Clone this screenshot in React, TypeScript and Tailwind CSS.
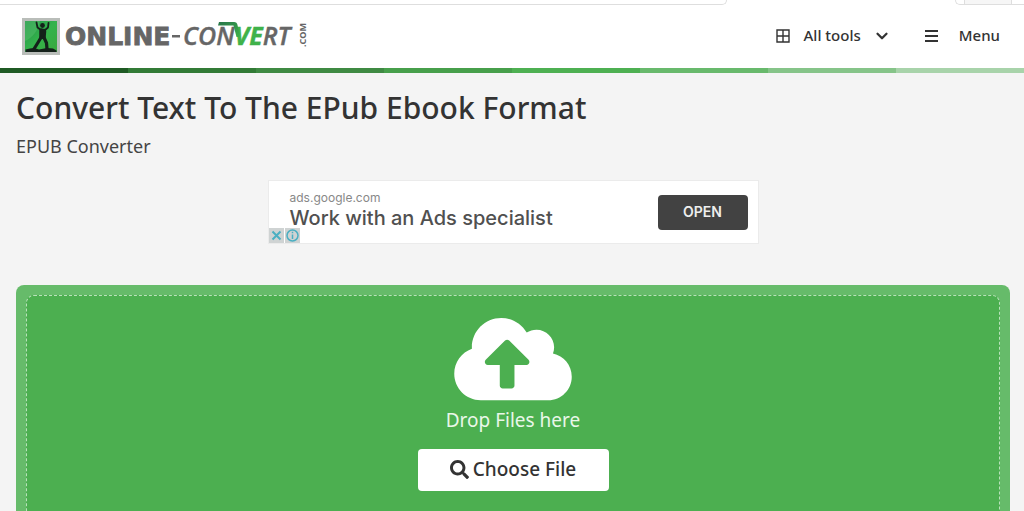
import { useRef } from "react";
import { FaCloudUploadAlt, FaSearch } from "react-icons/fa";
import { ChevronDown } from "lucide-react";

const STRIPES = [
  "bg-[#1f5a24]",
  "bg-[#327b36]",
  "bg-[#3f8a43]",
  "bg-[#479f4b]",
  "bg-[#4eb052]",
  "bg-[#68b96c]",
  "bg-[#86c489]",
  "bg-[#a8d3aa]",
];

function Logo() {
  return (
    <svg width="288" height="40" viewBox="0 0 288 40" role="img" aria-label="Online-Convert.com">
      <defs>
        <linearGradient id="badge" x1="0" y1="0" x2="1" y2="1">
          <stop offset="0" stopColor="#22914b" />
          <stop offset="0.5" stopColor="#34b34b" />
          <stop offset="1" stopColor="#3aa83c" />
        </linearGradient>
        <linearGradient id="swoosh" x1="0" y1="0" x2="1" y2="1">
          <stop offset="0" stopColor="#27744a" />
          <stop offset="1" stopColor="#3fb24a" />
        </linearGradient>
      </defs>

      {/* statue badge */}
      <rect x="0" y="1" width="38" height="37" fill="#b9bdb9" />
      <rect x="3" y="4" width="32" height="31" fill="url(#badge)" />
      <path d="M3 24C10 21 16 14 18 4H3z" fill="#5cc46e" opacity="0.45" />
      <g fill="none" stroke="#14211a" strokeLinecap="round" strokeLinejoin="round">
        <path d="M14.500 5.500L15.500 10.500L19 13M26.500 6L26 10.500L22.500 13.500" strokeWidth="1.800" />
        <path d="M19.500 13.500V20M22 14L21.500 20" strokeWidth="4.500" />
        <path d="M19 20.500L16 25.500L12 32M22 20.500L24.500 26L25 32" strokeWidth="3.200" />
      </g>
      <circle cx="20.500" cy="8.500" r="2.400" fill="#14211a" />
      <path d="M3.500 35V32.500L8 31.500L12 31L17 32.500L25 31L31 31.500L34.500 33.500V35z" fill="#14211a" />

      {/* wordmark */}
      <text
        x="43"
        y="28"
        fontFamily="DejaVu Sans, sans-serif"
        fontWeight="700"
        fontSize="25"
        fill="#666"
        stroke="#666"
        strokeWidth="0.800"
      >
        ONLINE
      </text>
      <rect x="150" y="18" width="8" height="2.500" fill="#666" />
      <text
        x="161"
        y="28"
        fontFamily="Open Sans, sans-serif"
        fontStyle="italic"
        fontWeight="600"
        fontSize="25"
        fill="#666"
        stroke="#666"
        strokeWidth="0.400"
      >
        CON
        <tspan fill="#3fb24a" stroke="#3fb24a" fontWeight="700">
          VE
        </tspan>
        RT
      </text>
      <path d="M197 5H212Q215 5 215.500 8L218 20L214.500 20L211.500 8.500H196z" fill="url(#swoosh)" />
      <text
        transform="translate(284 30) rotate(-90)"
        fontFamily="Open Sans, sans-serif"
        fontWeight="700"
        fontSize="9"
        fill="#666"
      >
        .COM
      </text>
    </svg>
  );
}

function GridIcon() {
  return (
    <svg width="14" height="14" viewBox="0 0 14 14" fill="none" stroke="#333" aria-hidden="true">
      <path d="M1 1h12v12H1zM7 1v12M1 7h12" strokeWidth="1.400" />
    </svg>
  );
}

function BarsIcon() {
  return (
    <svg width="13" height="12" viewBox="0 0 13 12" fill="none" stroke="#333" aria-hidden="true">
      <path d="M0 1h13M0 6h13M0 11h13" strokeWidth="2" />
    </svg>
  );
}

function Header() {
  return (
    <header className="bg-white">
      {/* bottom edge of the strip above the bar */}
      <div className="flex h-[5px]">
        <div className="grow rounded-br-md border-r border-b border-[#dedede]" />
        <div className="w-[228px]" />
        <div className="flex w-[69px] overflow-hidden rounded-bl-md border-b border-l border-[#dedede]">
          <span className="ml-2 w-12 border-x border-[#dedede] bg-[#f6f6f6]" />
        </div>
      </div>
      <div className="flex h-[63px] items-center justify-between pr-6 pl-[22px]">
        <a href="#top">
          <Logo />
        </a>
        <nav className="flex items-center pb-0.5 text-[15px] font-medium text-[#333]">
          <button type="button" className="flex items-center">
            <GridIcon />
            <span className="ml-3.5">All tools</span>
            <ChevronDown className="ml-3" size={18} strokeWidth={3} />
          </button>
          <button type="button" className="ml-[34px] flex items-center">
            <BarsIcon />
            <span className="ml-[21px]">Menu</span>
          </button>
        </nav>
      </div>
      <div className="grid h-[5px] grid-cols-8">
        {STRIPES.map((color) => (
          <span key={color} className={color} />
        ))}
      </div>
    </header>
  );
}

function AdBanner() {
  return (
    <aside className="relative mx-auto mt-5 flex h-16 w-[491px] max-w-full items-center justify-between border border-[#ebebeb] bg-white pr-2.5 pl-[21px] font-['Inter',sans-serif]">
      <div className="pb-1">
        <p className="text-[12px] leading-4 text-[#888]">ads.google.com</p>
        <p className="text-[20px] leading-6 font-medium text-[#505050]">Work with an Ads specialist</p>
      </div>
      <button
        type="button"
        className="h-[35px] w-[90px] rounded bg-[#424242] text-sm font-semibold text-[#eee]"
      >
        OPEN
      </button>
      <div className="absolute bottom-0 left-0 flex gap-px">
        <button type="button" aria-label="Close ad" className="bg-[#cfd3d3]">
          <svg width="15" height="15" viewBox="0 0 15 15" fill="none" stroke="#4aafc2" strokeWidth="2">
            <path d="M3.500 3.500l8 8M11.500 3.500l-8 8" />
          </svg>
        </button>
        <button type="button" aria-label="Ad info" className="bg-[#cfd3d3]">
          <svg width="15" height="15" viewBox="0 0 15 15" fill="none" stroke="#4aafc2" strokeWidth="1.500">
            <circle cx="7.500" cy="7.500" r="5.500" />
            <path d="M7.500 6.500v4.500M7.500 3.800v1.500" />
          </svg>
        </button>
      </div>
    </aside>
  );
}

function DropZone() {
  const fileInput = useRef<HTMLInputElement>(null);

  return (
    <section className="mt-[41px] rounded-lg bg-[#66bb6a] p-2.5">
      <div className="flex flex-col items-center rounded-lg border border-dashed border-[#b9e2ba] bg-[#4caf50] px-4 pt-4 pb-12">
        <FaCloudUploadAlt className="h-[94px] w-[118px] text-white" aria-hidden="true" />
        <p className="text-[19px] leading-7 text-[#e9f7e9]">Drop Files here</p>
        <input ref={fileInput} type="file" aria-label="Choose File" className="hidden" />
        <button
          type="button"
          onClick={() => fileInput.current?.click()}
          className="mt-[15px] flex h-[42px] w-[191px] items-center justify-center gap-1 rounded bg-white pb-0.5 text-[19px] font-medium text-[#333]"
        >
          <FaSearch size={19} aria-hidden="true" />
          Choose File
        </button>
      </div>
    </section>
  );
}

export default function App() {
  return (
    <div id="top" className="min-h-screen bg-[#f4f4f4] font-['Noto_Sans',sans-serif]">
      <Header />
      <main className="pt-[15px] pr-3.5 pl-4">
        <h1 className="text-[30px] leading-10 font-medium text-[#333]">
          Convert Text To The EPub Ebook Format
        </h1>
        <p className="mt-1 text-lg leading-7 text-[#444]">EPUB Converter</p>
        <AdBanner />
        <DropZone />
      </main>
    </div>
  );
}
